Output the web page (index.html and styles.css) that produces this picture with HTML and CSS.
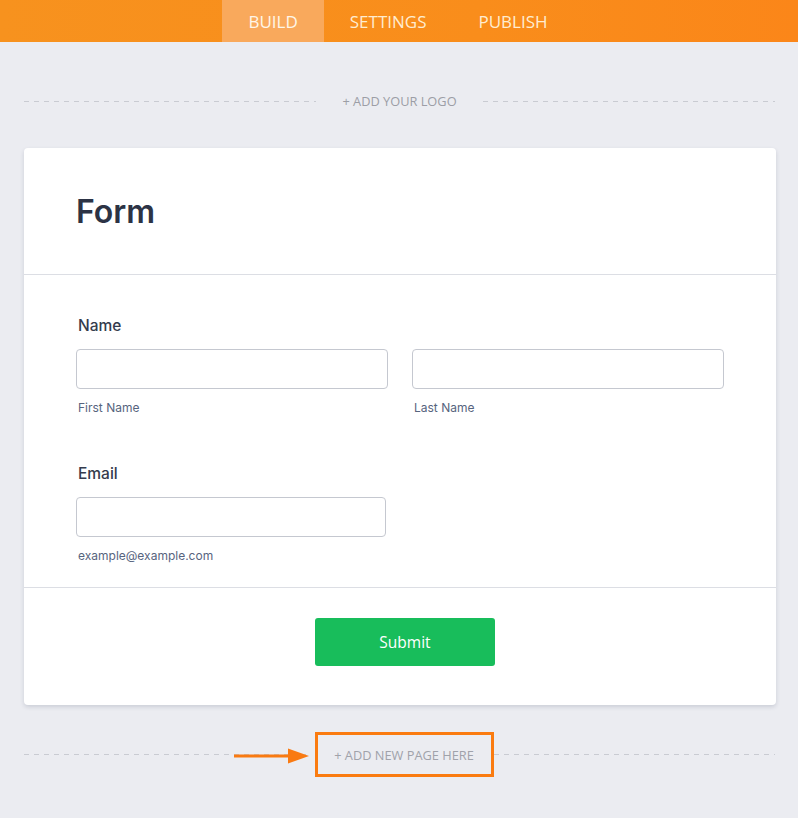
FILE: index.html
```html
<!DOCTYPE html>
<html>
<head>
<meta charset="utf-8">
<link rel="stylesheet" href="styles.css">
</head>
<body>
<header class="topbar">
  <nav class="tabs">
    <a class="tab active">BUILD</a>
    <a class="tab">SETTINGS</a>
    <a class="tab">PUBLISH</a>
  </nav>
</header>

<div class="logo-row">
  <span class="dash"></span>
  <span class="logo-text">+ ADD YOUR LOGO</span>
  <span class="dash"></span>
</div>

<main class="card">
  <div class="card-head">
    <h1 class="title">Form</h1>
  </div>
  <div class="card-body">
    <div class="field">
      <label class="label">Name</label>
      <div class="row">
        <div class="col">
          <div class="input"></div>
          <div class="sub">First Name</div>
        </div>
        <div class="col">
          <div class="input"></div>
          <div class="sub">Last Name</div>
        </div>
      </div>
    </div>
    <div class="field field-email">
      <label class="label">Email</label>
      <div class="input input-email"></div>
      <div class="sub">example@example.com</div>
    </div>
  </div>
  <div class="card-foot">
    <button class="submit">Submit</button>
  </div>
</main>

<div class="page-row">
  <span class="dash"></span>
  <span class="page-box">+ ADD NEW PAGE HERE</span>
  <span class="dash"></span>
  <svg class="arrow" width="76" height="18" viewBox="0 0 76 18">
    <rect x="0" y="7.5" width="58" height="3" fill="#f97a12"/>
    <polygon points="54,1.5 75,9 54,16.5" fill="#f97a12"/>
  </svg>
</div>
</body>
</html>
```
FILE: styles.css
```css
html, body {
  margin: 0;
  padding: 0;
}
body {
  background: #ebecf1;
  font-family: Inter, "Open Sans", sans-serif;
  width: 798px;
  height: 818px;
  overflow: hidden;
}
.topbar {
  height: 42px;
  background: linear-gradient(90deg, #f7921e 0%, #f98d1b 60%, #fb8619 100%);
  display: flex;
  justify-content: center;
}
.tabs {
  display: flex;
  margin-left: -2px;
}
.tab {
  display: flex;
  align-items: center;
  padding: 0 26px 0 26px;
  font-family: "Open Sans", sans-serif;
  font-size: 17px;
  color: #ffecd0;
}
.tab.active {
  background: #f9a95c;
  color: #fff6e8;
}
.logo-row {
  margin: 0 23px 0 24px;
  padding-top: 51px;
  height: 16px;
  display: flex;
  align-items: center;
  gap: 26px;
}
.dash {
  flex: 1;
  height: 1px;
  background: repeating-linear-gradient(90deg, #c9cbd2 0 5px, transparent 5px 10px);
}
.logo-text {
  font-family: "Open Sans", sans-serif;
  font-size: 12.8px;
  color: #9c9ea6;
  line-height: 16px;
}
.card {
  width: 752px;
  margin: 39px 0 0 24px;
  background: #fff;
  border-radius: 4px;
  box-shadow: 0 2px 4px rgba(40, 50, 80, 0.16);
}
.card-head {
  height: 126px;
  border-bottom: 1px solid #dcdee4;
  display: flex;
  align-items: center;
  padding-left: 52px;
}
.title {
  margin: 0;
  font-size: 32px;
  font-weight: 600;
  color: #2c3345;
  line-height: 40px;
  padding-top: 1px;
}
.card-body {
  padding: 41px 52px 23px 52px;
  border-bottom: 1px solid #dcdee4;
}
.label {
  display: block;
  font-size: 15.5px;
  font-weight: 500;
  color: #343b4d;
  line-height: 20px;
  padding-left: 2px;
  margin-bottom: 13px;
}
.row {
  display: flex;
  gap: 24px;
}
.col {
  width: 312px;
}
.input {
  height: 38px;
  border: 1px solid #c5c8d0;
  border-radius: 4px;
  background: #fff;
}
.input-email {
  width: 308px;
}
.sub {
  margin-top: 11px;
  font-size: 12px;
  color: #57647e;
  line-height: 16px;
  padding-left: 2px;
}
.field-email {
  margin-top: 48px;
}
.card-foot {
  display: flex;
  justify-content: center;
  padding: 30px 0 39px 0;
}
.submit {
  width: 180px;
  height: 48px;
  border: none;
  border-radius: 3px;
  background: #18bd5b;
  color: #fff;
  font-family: "Open Sans", sans-serif;
  font-size: 15.5px;
  margin-left: 10px;
}
.page-row {
  position: relative;
  margin: 27px 23px 0 24px;
  display: flex;
  align-items: center;
  height: 45px;
}
.page-box {
  box-sizing: border-box;
  width: 179px;
  height: 45px;
  border: 3px solid #fa7b10;
  display: flex;
  align-items: center;
  justify-content: center;
  font-family: "Open Sans", sans-serif;
  font-size: 12.8px;
  color: #a0a2aa;
  margin-left: 9px;
}
.arrow {
  position: absolute;
  left: 210px;
  top: 15px;
}
```
